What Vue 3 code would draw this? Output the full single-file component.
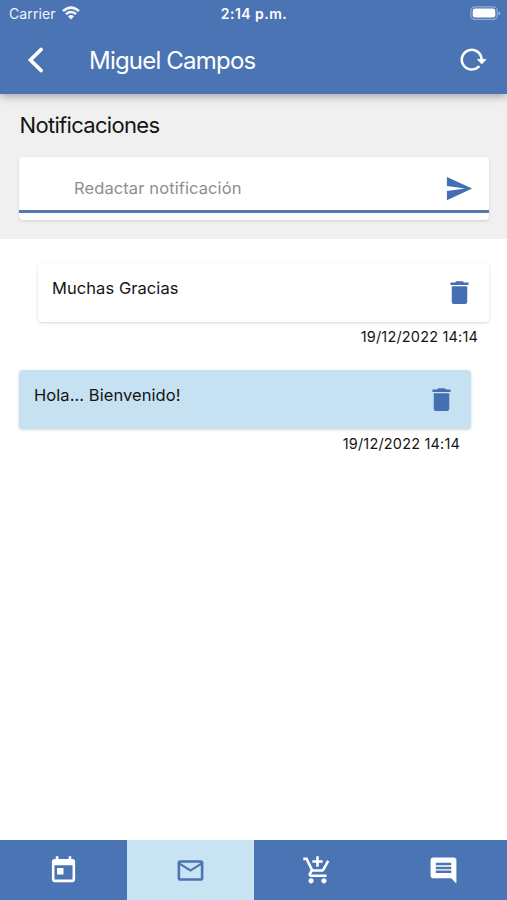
<script setup>
import { ref } from 'vue'

const draft = ref('')
const messages = [
  { id: 1, text: 'Muchas Gracias', date: '19/12/2022 14:14', own: true },
  { id: 2, text: 'Hola... Bienvenido!', date: '19/12/2022 14:14', own: false },
]
const tabs = [
  { name: 'agenda', d: 'M19 3h-1V1h-2v2H8V1H6v2H5c-1.11 0-1.99.9-1.99 2L3 19c0 1.1.89 2 2 2h14c1.1 0 2-.9 2-2V5c0-1.1-.9-2-2-2zm0 16H5V8h14v11zM7 10h5v5H7z' },
  { name: 'mail', d: 'M22 6c0-1.1-.9-2-2-2H4c-1.1 0-2 .9-2 2v12c0 1.1.9 2 2 2h16c1.1 0 2-.9 2-2V6zm-2 0l-8 5-8-5h16zm0 12H4V8l8 5 8-5v10z' },
  { name: 'cart', d: 'M11 9h2V6h3V4h-3V1h-2v3H8v2h3v3zm-4 9c-1.1 0-1.99.9-1.99 2S5.9 22 7 22s2-.9 2-2-.9-2-2-2zm10 0c-1.1 0-1.99.9-1.99 2s.89 2 1.99 2 2-.9 2-2-.9-2-2-2zm-9.83-3.25l.03-.12.9-1.63h7.45c.75 0 1.41-.41 1.75-1.03l3.86-7.01L19.42 4h-.01l-1.1 2-2.76 5H8.53l-.13-.27L6.16 6l-.95-2-.94-2H1v2h2l3.6 7.59-1.35 2.45c-.16.28-.25.61-.25.96 0 1.1.9 2 2 2h12v-2H7.42c-.13 0-.25-.11-.25-.25z' },
  { name: 'chat', d: 'M21.99 4c0-1.1-.89-2-1.99-2H4c-1.1 0-2 .9-2 2v12c0 1.1.9 2 2 2h14l4 4-.01-18zM18 14H6v-2h12v2zm0-3H6V9h12v2zm0-3H6V6h12v2z' },
]
const active = ref('mail')
</script>

<template>
  <div class="screen">
    <header class="header">
      <div class="status">
        <div class="carrier">
          <span>Carrier</span>
          <svg class="wifi" viewBox="0 0 18 14">
            <path d="M1 5.1Q9-1.8 17 5.1M3.9 8.1Q9 3.9 14.1 8.1" fill="none" stroke="currentColor" stroke-width="2.5" />
            <path d="M5.9 10.3Q9 7.9 12.1 10.3L9 13.5z" fill="currentColor" />
          </svg>
        </div>
        <span class="clock">2:14 p.m.</span>
        <svg class="battery" viewBox="0 0 31 15">
          <rect x=".8" y=".8" width="26.4" height="12.6" rx="4" fill="none" stroke="#fff" stroke-opacity=".4" stroke-width="1.2" />
          <rect x="2.7" y="2.6" width="22.6" height="9" rx="2.3" fill="#fff" />
          <path d="M28.5 5.2q1.7.6 1.7 2t-1.7 2z" fill="#fff" fill-opacity=".5" />
        </svg>
      </div>
      <div class="toolbar">
        <svg class="back" viewBox="0 0 18 28"><path d="M14.2 3.4L3.4 14 14.2 24.6" fill="none" stroke="currentColor" stroke-width="3.6" stroke-linecap="round" stroke-linejoin="miter" /></svg>
        <h1>Miguel Campos</h1>
        <svg class="refresh" viewBox="0 0 28 26">
          <path d="M18.6 19.8A9.9 9.9 0 1 1 21.6 12.2" fill="none" stroke="currentColor" stroke-width="2.5" stroke-linecap="round" />
          <path d="M17.4 12.4h8.6l-4.3 4.5z" fill="currentColor" stroke="currentColor" stroke-width=".8" stroke-linejoin="round" />
        </svg>
      </div>
    </header>

    <section class="compose">
      <h2>Notificaciones</h2>
      <div class="box">
        <div class="field">
          <input v-model="draft" type="text" placeholder="Redactar notificación">
          <svg class="icon" viewBox="0 0 512 512"><path fill="currentColor" d="M48 448l416-192L48 64v149.333L346 256 48 298.667z" /></svg>
        </div>
      </div>
    </section>

    <main class="messages">
      <article v-for="m in messages" :key="m.id" class="message" :class="{ own: m.own }">
        <div class="card">
          <p>{{ m.text }}</p>
          <svg class="icon" viewBox="0 0 24 24"><path fill="currentColor" d="M6 19.4c0 .9.7 1.5 1.6 1.5h8.8c.9 0 1.6-.6 1.6-1.5V7.2H6v12.200zM19 4.200h-3.500l-1-.9h-5l-1 .9H5v1.900h14V4.200z" /></svg>
        </div>
        <time>{{ m.date }}</time>
      </article>
    </main>

    <nav class="tabs">
      <button v-for="t in tabs" :key="t.name" :class="{ active: active === t.name }" @click="active = t.name">
        <svg viewBox="0 0 24 24"><path fill="currentColor" :d="t.d" /></svg>
      </button>
    </nav>
  </div>
</template>

<style>
body { margin: 0; background: #fff; }
</style>

<style scoped>
* { box-sizing: border-box; }
svg { display: block; flex: none; }
.screen {
  display: flex;
  flex-direction: column;
  height: 100vh;
  overflow: hidden;
  font-family: Inter, "Liberation Sans", sans-serif;
  color: #141414;
  background: #fff;
}
.header {
  flex: none;
  position: relative;
  height: 94px;
  color: #fff;
  background: #4a74b4;
  box-shadow: 0 2px 9px rgba(0, 0, 0, .35);
}
.status {
  display: grid;
  grid-template-columns: 1fr auto 1fr;
  align-items: center;
  height: 26px;
  padding: 0 6px 0 9px;
  font-size: 14px;
}
.carrier { display: flex; align-items: center; gap: 6px; letter-spacing: .1px; opacity: .93; }
.wifi { width: 18px; height: 14px; }
.clock { margin-right: 2px; font-weight: 600; letter-spacing: .45px; }
.battery { justify-self: end; width: 31px; height: 15px; }
.toolbar { display: flex; align-items: center; height: 68px; padding: 0 19px 0 27px; }
.back { width: 18px; height: 28px; }
h1 { flex: 1; margin: 0 0 0 44px; padding-top: 1px; font-size: 24px; font-weight: 400; line-height: 31px; letter-spacing: -.8px; }
.refresh { width: 28px; height: 26px; }
.compose { flex: none; height: 145px; padding: 17px 18px 0 19px; background: #f0f0f0; }
h2 { margin: 0 0 0 .5px; font-size: 22px; font-weight: 400; line-height: 29px; letter-spacing: -.68px; }
.box {
  height: 63px;
  margin-top: 17px;
  border-radius: 4px;
  background: #fff;
  box-shadow: 0 1px 3px rgba(0, 0, 0, .14);
}
.field {
  display: flex;
  align-items: center;
  height: 56px;
  padding: 9px 14px 0 55px;
  border-bottom: 3px solid #5279b3;
}
input {
  flex: 1;
  min-width: 0;
  padding: 0;
  border: 0;
  outline: 0;
  background: none;
  font: 400 16.5px Inter, "Liberation Sans", sans-serif;
  letter-spacing: .1px;
  color: #141414;
}
input::placeholder { color: #8e8e8e; opacity: 1; }
.icon { width: 31px; height: 31px; color: #456fb2; }
.messages { flex: 1; padding: 24px 18px 0 19px; }
.message { height: 107px; margin-right: 18px; }
.message.own { margin: 0 0 0 19px; }
.card {
  display: flex;
  justify-content: space-between;
  height: 59px;
  padding: 14px 14px 14px 15px;
  border-radius: 4px;
  background: #c6e1f1;
  box-shadow: 0 1px 3px rgba(0, 0, 0, .17);
}
.own .card { padding-left: 14px; background: #fff; }
p { margin: 0; font-size: 16.5px; line-height: 22px; letter-spacing: .06px; }
time { display: block; padding: 5px 11px 0 0; font-size: 14.5px; line-height: 20px; letter-spacing: .17px; text-align: right; }
.tabs { flex: none; display: grid; grid-template-columns: 1.007fr 1fr 1fr 1fr; height: 60px; }
.tabs button {
  display: flex;
  align-items: center;
  justify-content: center;
  padding: 0;
  border: 0;
  color: #fff;
  background: #4a74b4;
}
.tabs button.active { color: #4a74b4; background: #c8e3f1; }
.tabs svg { width: 31px; height: 31px; }
</style>
